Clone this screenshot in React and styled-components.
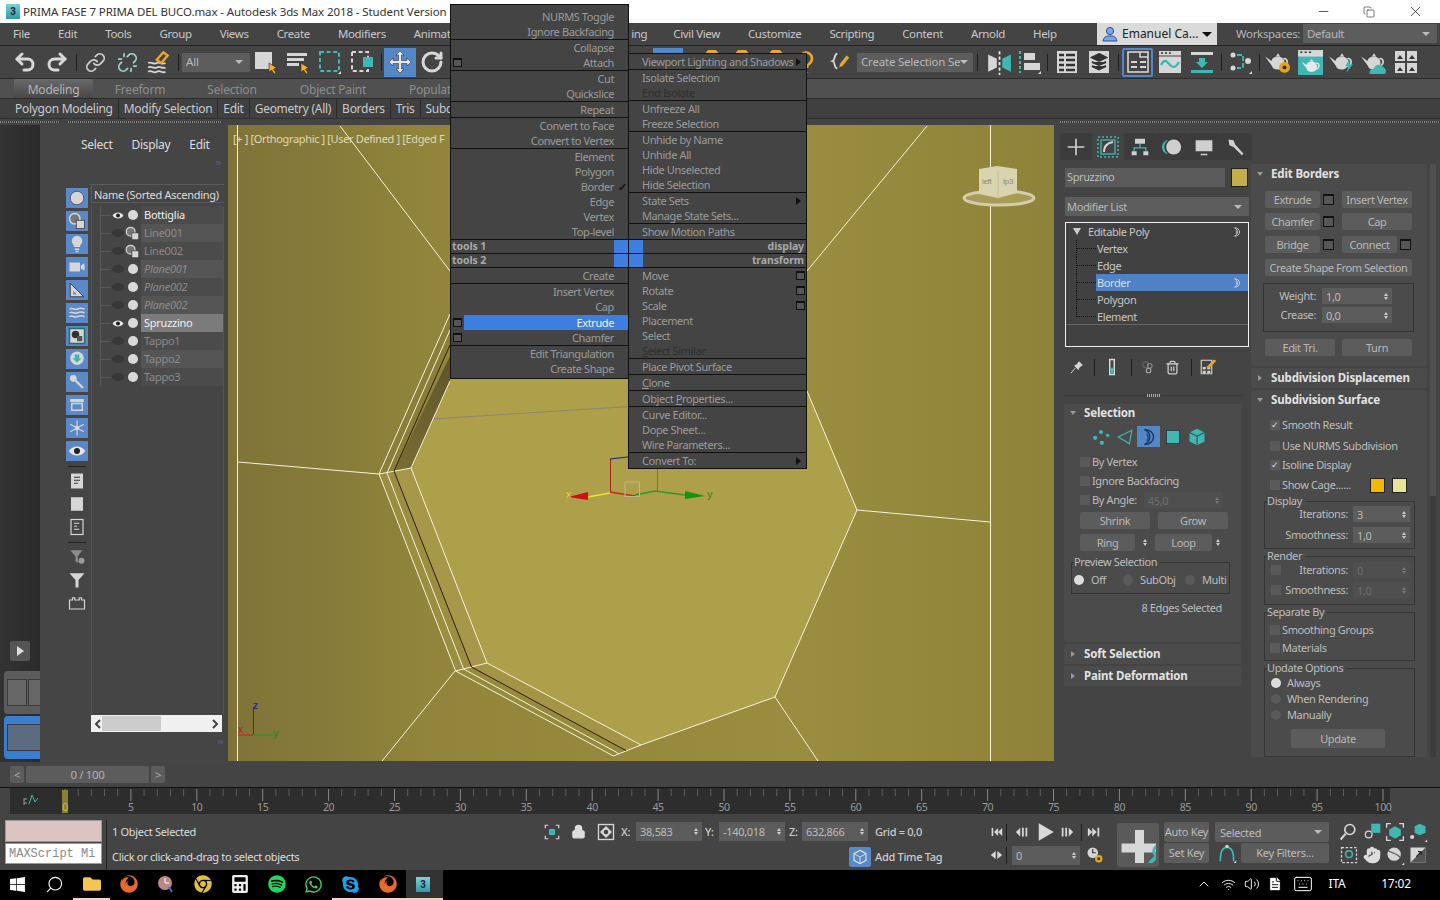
import React from "react";
import styled, { createGlobalStyle } from "styled-components";
import { Undo2, Redo2, Link, Unlink, RotateCw, Search, Trash2, Lock, Hand, ChevronUp, Wifi, Volume2, Keyboard, FileText, Minus, X as XIcon, Copy } from "lucide-react";
import { FaWindows, FaFirefox, FaChrome, FaSpotify, FaWhatsapp, FaSkype, FaFolder, FaCalculator } from "react-icons/fa";

const Global = createGlobalStyle`
  html, body { margin: 0; padding: 0; background: #444; }
  #root { width: 1440px; height: 900px; }
  * { box-sizing: border-box; }
`;
const TEAL = "#3fb8b4";
const LIGHT = "#d6d6d6";

const Frame = styled.div`
  position: relative; width: 1440px; height: 900px; overflow: hidden;
  display: flex; flex-direction: column; background: #444;
  font: 11.5px/1.2 "Noto Sans", "Open Sans", sans-serif; letter-spacing: -0.35px; color: #c4c4c4;
`;
/* title */
const TitleBar = styled.div`
  height: 23px; flex: none; background: #fff; color: #333; display: flex; align-items: center;
  font-size: 11.5px; padding-left: 6px; letter-spacing: -0.1px;
`;
const AppMark = styled.span`
  width: 14px; height: 15px; margin-right: 3px; background: linear-gradient(#7fd0d6, #2f9aa6); color: #123; font: bold 10px/15px "Liberation Sans", sans-serif; text-align: center; letter-spacing: 0;
`;
const WinButtons = styled.div`
  margin: 0 2px 0 auto; display: flex; align-items: center; color: #222;
`;
const WinBtn = styled.span`
  width: 46px; height: 23px; display: flex; align-items: center; justify-content: center;
`;
/* menu */
const MenuBar = styled.div`
  height: 23px; flex: none; display: flex; align-items: stretch; background: #444; border-bottom: 1px solid #222; padding-left: 13px; color: #c8c8c8;
`;
const MenuItem = styled.span`
  margin-right: ${p => p.$mr ?? 28}px; line-height: 21px; white-space: nowrap;
`;
const UserBox = styled.div`
  margin-left: auto; width: 120px; height: 22px; background: #dadada; color: #222; display: flex; align-items: center; padding-left: 5px; gap: 4px; font-size: 12px; letter-spacing: 0;
`;
const Caret = styled.span`
  width: 0; height: 0; border-left: ${p => p.$s || 4}px solid transparent; border-right: ${p => p.$s || 4}px solid transparent; border-top: ${p => p.$s || 4}px solid ${p => p.$c || "#bbb"}; flex: none;
`;
const WsLabel = styled.span`
  margin-left: 19px; width: 67px; line-height: 22px; color: #b5b5b5;
`;
const WsDrop = styled.div`
  width: 134px; height: 19px; margin: 1px 3px 0 0; background: #5d5d5d; display: flex; align-items: center; justify-content: space-between; padding: 0 7px 0 4px; color: #b8b8b8;
`;
/* toolbar */
const Toolbar = styled.div`
  height: 33px; flex: none; display: flex; align-items: center; background: #444; border-bottom: 1px solid #2c2c2c; padding-left: 9px;
`;
const Tool = styled.span`
  width: ${p => p.$w || 32}px; height: ${p => p.$h || 29}px; flex: none; display: flex; align-items: center; justify-content: center;
  ${p => p.$on && `background:#5487c8;`} ${p => p.$outline && `border:2px solid #5487c8; border-radius:2px;`}
`;
const TSep = styled.span`
  width: 1px; height: 17px; background: #1e1e1e; margin: 0 ${p => p.$m ?? 2.5}px; flex: none;
`;
const Gap = styled.span`
  width: ${p => p.$w}px; flex: none;
`;
const Drop = styled.div`
  width: ${p => p.$w}px; height: ${p => p.$h || 19}px; flex: none; background: ${p => p.$bg || "#5d5d5d"}; display: flex; align-items: center; justify-content: space-between; padding: 0 7px 0 4px; letter-spacing: -0.2px; color: #b9b9b9; white-space: nowrap; overflow: hidden; border-radius: 1px;
`;
/* ribbon */
const RibbonTabs = styled.div`
  height: 20px; flex: none; display: flex; align-items: stretch; padding-left: 14px; background: #505050; border-bottom: 1px solid #2c2c2c; color: #8d8d8d; font-size: 12px; letter-spacing: -0.2px;
`;
const RibbonTab = styled.span`
  width: ${p => p.$w}px; text-align: center; line-height: 21px;
  ${p => p.$on && `background: linear-gradient(#6a6a6a,#484848); color:#b5b5b5; border-radius:2px 2px 0 0;`}
`;
const RibbonPanels = styled.div`
  height: 20px; flex: none; display: flex; align-items: center; padding-left: 10px; background: #404040; border-bottom: 1px solid #303030; color: #c9c9c9; font-size: 12px; letter-spacing: -0.28px;
`;
const RibbonPanel = styled.span`
  padding: 0 5px; border-right: ${p => p.$nb ? 0 : "1px solid #2a2a2a"}; line-height: 19px; white-space: nowrap;
`;
const Grip = styled.div`
  height: 6px; flex: none; background: #444; display: flex; padding: 2px 0;
`;
const Dots = styled.span`
  height: 2px; width: ${p => p.$w}px; margin-left: ${p => p.$ml || 0}px; background: repeating-linear-gradient(90deg, #888 0 1px, #333 1px 2px);
`;
/* main */
const Main = styled.div`
  height: 637px; flex: none; display: flex;
`;
const SideDark = styled.div`
  width: 40px; flex: none; background: linear-gradient(90deg, #333, #2b2b2b); display: flex; flex-direction: column; align-items: flex-start; padding: 516px 0 0 4px; overflow: hidden;
`;
const SideBtn = styled.span`
  width: 20px; height: 20px; margin-left: 6px; background: #555; border-radius: 2px; display: flex; align-items: center; justify-content: center;
`;
const Layout = styled.span`
  width: 46px; height: 43px; flex: none; margin-top: ${p => p.$mt}px; display: flex; gap: 1px; padding: 8px 3px; border-radius: 4px;
  background: ${p => p.$on ? "#3a7ed0" : "#5c5c5c"};
`;
const Pane = styled.span`
  flex: ${p => p.$f || 1}; background: ${p => p.$on ? "#5b6c82" : "#676767"}; border: 1px solid #3a3a3a;
`;
const Explorer = styled.div`
  width: 188px; flex: none; background: #454545; display: flex; flex-direction: column; padding-top: 11px;
`;
const ExTabs = styled.div`
  display: flex; gap: 19px; padding-left: 41px; height: 18px; line-height: 18px; color: #ddd; font-size: 12px; letter-spacing: -0.3px;
`;
const More = styled.div`
  height: 16px; line-height: 16px; text-align: right; padding-right: 7px; color: #50557a; font-size: 10px; font-weight: bold;
`;
const ExBody = styled.div`
  flex: 1; display: flex; padding-left: 26px;
`;
const Strip = styled.div`
  width: 22px; flex: none; padding-top: 18px; display: flex; flex-direction: column; gap: 3px;
`;
const StripBtn = styled.span`
  width: 22px; height: 20px; flex: none; background: ${p => p.$plain ? "none" : "#5a88c8"}; display: flex; align-items: center; justify-content: center;
`;
const StripSep = styled.span`
  height: 1px; margin: 2px 2px 1px; background: #222; flex: none;
`;
const Tree = styled.div`
  width: 133px; margin: 14px 0 0 3px; display: flex; flex-direction: column;
`;
const TreeHead = styled.div`
  height: 19px; line-height: 19px; font-size: 11px; padding-left: 2px; color: #ddd; border: 1px solid #5a5a5a; border-right: 0; margin-bottom: 3px; white-space: nowrap; letter-spacing: -0.28px;
`;
const TreeBody = styled.div`
  flex: 1; border-left: 1px solid #555; border-right: 1px solid #555;
`;
const TreeRow = styled.div`
  height: 18px; display: flex; align-items: center;
`;
const Guide = styled.span`
  width: 12px; height: 18px; margin-left: 8px; flex: none; border-left: 1px solid #5a5a5a; position: relative;
  &::after { content: ""; position: absolute; left: 0; top: 9px; width: 10px; border-top: 1px solid #5a5a5a; }
`;
const Slot = styled.span`
  width: ${p => p.$w}px; height: 16px; flex: none; display: flex; align-items: center; justify-content: center;
`;
const Blob = styled.span`
  width: 12px; height: 8px; border-radius: 50%; background: #383838; flex: none;
`;
const Dot = styled.span`
  width: 10px; height: 10px; border-radius: 50%; background: #d9d9d9;
`;
const RowName = styled.span`
  flex: 1; height: 18px; line-height: 18px; padding-left: 3px; font-size: 11px; letter-spacing: -0.25px;
  background: ${p => p.$sel ? "#7b7b7b" : p.$alt ? "#555" : "#4b4b4b"};
  color: ${p => p.$on ? "#f0f0f0" : "#8c8c8c"}; font-style: ${p => p.$it ? "italic" : "normal"};
`;
const HScroll = styled.div`
  height: 17px; width: 131px; margin-top: 1px; background: #f0f0f0; display: flex; align-items: center; justify-content: space-between; padding: 0 3px; color: #444;
`;
const Thumb = styled.span`
  width: 59px; height: 15px; background: #ccc; margin-left: 1px; margin-right: auto;
`;
const MoreBottom = styled(More)`
  margin: 1px 0 15px -26px; padding-right: 1px; height: 14px;
`;
const Viewport = styled.div`
  width: 826px; height: 636px; flex: none; position: relative; overflow: hidden;
`;
const VLabel = styled.div`
  position: absolute; left: 5px; top: 7px; color: #dfd9b6; font-size: 11px; white-space: nowrap; letter-spacing: -0.35px;
`;
const VSvg = styled.svg`
  display: block;
`;
/* right panel */
const Right = styled.div`
  width: 386px; flex: none; background: #444; padding: 8px 0 0 6px; display: flex; flex-direction: column; color: #bdbdbd; font-size: 11px; letter-spacing: -0.38px;
`;
const CmdTabs = styled.div`
  height: 27px; display: flex;
`;
const CmdTab = styled.span`
  width: 32px; display: flex; align-items: center; justify-content: center; flex: none; background: ${p => p.$on ? "#444" : "#3c3c3c"}; border-radius: 3px 3px 0 0;
`;
const Cols = styled.div`
  flex: 1; display: flex;
`;
const ColA = styled.div`
  width: 191px; flex: none; padding: 8px 0 0 4px; background: #444;
`;
const ColB = styled.div`
  width: 176px; flex: none; padding-top: 4px;
`;
const Scroll = styled.div`
  width: 6px; margin: 4px 0 0 3px; height: 593px; background: #3c3c3c;
  &::before { content: ""; display: block; height: 332px; background: #4f4f4f; }
`;
const NameRow = styled.div`
  display: flex; margin-left: 1px; gap: 6px;
`;
const NameInput = styled.div`
  width: 160px; height: 19px; background: #5b5b5b; line-height: 18px; padding-left: 2px;
`;
const Swatch = styled.span`
  width: ${p => p.$w || 17}px; height: ${p => p.$h || 19}px; background: ${p => p.$c}; border: 1px solid #222; flex: none;
  ${p => p.$ml && `margin-left:${p.$ml}px;`}
`;
const ModDrop = styled(Drop)`
  margin: 10px 0 6px 1px; padding-left: 2px; letter-spacing: -0.35px;
`;
const Stack = styled.div`
  width: 184px; height: 125px; margin-left: 1px; border: 1px solid #f0f0f0; background: #414141; color: #c6c6c6;
`;
const StackList = styled.div`
  border-bottom: 1px solid #666; height: 102px;
`;
const StackRow = styled.div`
  height: 17px; display: flex; align-items: stretch; line-height: 17px;
`;
const Tri = styled.span`
  width: 0; height: 0; border-left: 4px solid transparent; border-right: 4px solid transparent; border-top: 7px solid #ccc; margin: 5px 6px 0 7px; flex: none;
`;
const Branch = styled.span`
  width: 20px; margin-left: 10px; flex: none; height: ${p => p.$last ? "9px" : "17px"}; border-left: 1px dotted #111; position: relative;
  &::after { content: ""; position: absolute; left: 0; top: 8px; width: 19px; border-top: 1px dotted #111; }
`;
const StackLabel = styled.span`
  flex: 1; padding-left: 1px; display: flex; justify-content: space-between; align-items: center; padding-right: 6px;
  ${p => p.$sel && `background:#4f81c7; color:#ddd;`}
`;
const StackTools = styled.div`
  height: 20px; margin: 10px 0 0 2px; display: flex; align-items: center;
`;
const Divider = styled.div`
  height: 1px; margin: 18px 8px 0 0; background: #3a3a3a; position: relative;
  &::after { content: ""; position: absolute; left: 83px; top: -1px; width: 14px; height: 3px; background: repeating-linear-gradient(90deg, #aaa 0 1px, #444 1px 2px); }
`;
const Rollout = styled.section`
  width: ${p => p.$w || 177}px; ${p => p.$h && `height:${p.$h}px;`} margin-top: ${p => p.$mt || 0}px; background: #4b4b4b; border-radius: 2px; overflow: hidden;
`;
const RollHead = styled.header`
  height: ${p => p.$h || 17}px; display: flex; align-items: center; font-weight: 700; color: #e2e2e2; font-size: 11.5px; letter-spacing: -0.15px; white-space: nowrap; padding-right: 6px;
`;
const Arrow = styled.span`
  flex: none; margin: 0 8px 0 6px; width: 6px; height: 6px; display: flex; align-items: center; justify-content: center;
  &::before { content: ""; ${p => p.$open ? "border-left:3px solid transparent;border-right:3px solid transparent;border-top:4px solid #999;" : "border-top:3px solid transparent;border-bottom:3px solid transparent;border-left:4px solid #999;"} }
`;
const Handle = styled.span`
  margin-left: auto; width: 6px; height: 6px; flex: none; background: radial-gradient(circle, #888 35%, transparent 40%) 0 0/2px 2px;
`;
const RowY = styled.div`
  display: flex; align-items: center; height: ${p => p.$h || 18}px; margin-top: ${p => p.$mt || 0}px; padding-left: ${p => p.$pl || 0}px;
`;
const CheckBox = styled.span`
  width: 10px; height: 10px; flex: none; background: #5a5a5a; margin-right: ${p => p.$mr ?? 2}px; color: #ddd; font-size: 9px; line-height: 10px; text-align: center; letter-spacing: 0;
`;
const Btn = styled.span`
  width: ${p => p.$w}px; height: ${p => p.$h || 17}px; flex: none; background: #5c5c5c; border-radius: 2px; text-align: center; line-height: ${p => (p.$h || 17)}px; color: #b8b8b8; margin-left: ${p => p.$ml || 0}px; white-space: nowrap;
`;
const OptBox = styled.span`
  width: ${p => p.$s || 9}px; height: ${p => p.$s || 9}px; margin: 0 ${p => p.$mr ?? 2}px 0 ${p => p.$ml ?? 2}px; flex: none; border: 1px solid #111; border-top-width: 2px; background: #565656;
`;
const Spin = styled.span`
  width: ${p => p.$w}px; height: ${p => p.$h || 16}px; flex: none; background: ${p => p.$off ? "#4f4f4f" : "#5c5c5c"}; color: ${p => p.$off ? "#6e6e6e" : "#bbb"}; display: flex; align-items: center; justify-content: space-between; padding: 0 4px; line-height: 1; margin-left: ${p => p.$ml || 0}px;
`;
const SpinArrows = styled.span`
  display: flex; flex-direction: column; gap: 1px; flex: none; margin-left: ${p => p.$ml || 0}px;
  &::before, &::after { content: ""; border-left: 2.5px solid transparent; border-right: 2.5px solid transparent; }
  &::before { border-bottom: 3px solid ${p => p.$c || "#ccc"}; }
  &::after { border-top: 3px solid ${p => p.$c || "#ccc"}; }
`;
const Box = styled.div`
  width: 151px; height: 49px; margin: 7px 0 0 12px; border: 1px solid #333; padding-top: 4px;
`;
const Field = styled.fieldset`
  width: ${p => p.$w}px; margin: ${p => p.$mt || 0}px 0 0 ${p => p.$ml || 0}px; padding: 0 0 ${p => p.$pb || 0}px; border: 1px solid #353535; min-width: 0;
`;
const Legend = styled.legend`
  padding: 0 3px 0 0; margin-left: 2px; height: 14px; line-height: 14px; color: #bdbdbd;
`;
const Radio = styled.span`
  width: 10px; height: 10px; border-radius: 50%; flex: none; background: ${p => p.$on ? "#ddd" : "#5a5a5a"}; margin-left: ${p => p.$ml || 0}px;
`;
const RLabel = styled.span`
  margin-left: ${p => p.$ml || 0}px; white-space: nowrap; ${p => p.$w && `width:${p.$w}px; flex:none;`}
`;
const RightLabel = styled.span`
  width: ${p => p.$w}px; text-align: right; flex: none; white-space: nowrap;
`;
const StatusNote = styled.div`
  margin: 7px 19px 0 0; height: 14px; line-height: 14px; text-align: right;
`;
/* timeline */
const SliderRow = styled.div`
  height: 25px; flex: none; display: flex; align-items: flex-start; padding: 4px 0 0 10px; background: #444; gap: 2px;
`;
const SliderBtn = styled.span`
  width: ${p => p.$w}px; height: 17px; background: #5c5c5c; border-radius: 2px; text-align: center; line-height: 17px; color: #b0b0b0;
`;
const TrackRow = styled.div`
  height: 28px; flex: none; border-top: 1px solid #111; display: flex; background: #444; padding-left: 10px;
`;
const Track = styled.div`
  width: 1380px; height: 26px; background: #2d2d2d;
`;
const TrackSvg = styled.svg`
  display: block; overflow: visible;
`;
const Status = styled.div`
  height: 55px; flex: none; display: flex; background: #444; padding-top: 5px;
`;
const Mini = styled.div`
  width: 97px; margin-left: 5px; flex: none; height: 44px; display: flex; flex-direction: column; gap: 1px;
`;
const MiniPink = styled.div`
  height: 22px; background: #dcc4c4; border: 1px solid #9a9a9a;
`;
const MiniWhite = styled.div`
  height: 21px; background: #fff; color: #8a8a8a; font: 12px/20px "Liberation Mono", monospace; letter-spacing: 0; padding-left: 3px; overflow: hidden; white-space: nowrap; border: 1px solid #9a9a9a;
`;
const StSep = styled.span`
  width: 1px; height: 50px; margin: 0 5px 0 4px; background: #222; flex: none;
`;
const Info = styled.div`
  width: 426px; flex: none; display: flex; flex-direction: column; padding-top: 5px; color: #ddd; font-size: 11px;
`;
const InfoLine = styled.div`
  height: 14px; line-height: 14px; margin-bottom: ${p => p.$mb || 0}px; white-space: nowrap; letter-spacing: -0.3px;
`;
const Coords = styled.div`
  width: 452px; flex: none; display: flex; flex-direction: column; padding-top: 2px; font-size: 11px; letter-spacing: -0.3px;
`;
const CoordRow = styled.div`
  height: 19px; display: flex; align-items: center; margin-top: ${p => p.$mt || 0}px; padding-left: ${p => p.$pl || 0}px;
`;
const CLabel = styled.span`
  width: ${p => p.$w}px; flex: none; color: #ccc; font-weight: 500; white-space: nowrap; padding-left: ${p => p.$pl || 0}px;
`;
const CIcon = styled.span`
  width: 27px; flex: none; display: flex; justify-content: center;
`;
const TagBtn = styled.span`
  width: 22px; height: 20px; background: #5a88c8; border-radius: 2px; display: flex; align-items: center; justify-content: center; margin-right: 4px;
`;
const Play = styled.div`
  width: 127px; flex: none; display: flex; flex-direction: column; padding-top: 2px; font-size: 11px;
`;
const PlayRow = styled.div`
  height: 20px; display: flex; align-items: center; margin-top: ${p => p.$mt || 0}px;
`;
const PSlot = styled.span`
  width: ${p => p.$w}px; flex: none; display: flex; align-items: center; justify-content: center; color: #ddd;
`;
const BigKey = styled.div`
  width: 42px; height: 44px; margin-top: 3px; flex: none; background: #5a5a5a; border-radius: 3px; display: flex; align-items: center; justify-content: center;
`;
const Keys = styled.div`
  width: 165px; margin-left: 5px; flex: none; display: grid; grid-template-columns: 51px 26px 88px; grid-template-rows: 20px 20px; row-gap: 1px; padding-top: 2px; font-size: 11px; letter-spacing: -0.3px;
`;
const KeyBtn = styled.span`
  background: #5c5c5c; text-align: center; line-height: 19px; color: #bbb; border-radius: 2px; white-space: nowrap; ${p => p.$narrow && "margin-right:6px;"}
`;
const KeyDrop = styled(KeyBtn)`
  grid-column: span 2; text-align: left; padding: 0 7px 0 5px; display: flex; align-items: center; justify-content: space-between;
`;
const KeyIco = styled.span`
  display: flex; align-items: center; justify-content: center; margin-right: 3px;
`;
const Nav = styled.div`
  width: 92px; margin-left: 8px; flex: none; display: grid; grid-template-columns: repeat(4, 23px); grid-template-rows: 20px 20px; row-gap: 3px; padding-top: 2px;
`;
const NavI = styled.span`
  display: flex; align-items: center; justify-content: center;
`;
/* taskbar */
const Taskbar = styled.div`
  height: 30px; flex: none; background: #000; display: flex; align-items: stretch; color: #fff;
`;
const TSlot = styled.span`
  width: ${p => p.$w || 37}px; flex: none; display: flex; align-items: center; justify-content: center; ${p => p.$active && "background:#333;"} border-bottom: 2px solid ${p => p.$run ? "#f3d3b8" : "transparent"}; ${p => p.$first && "margin-left:-1px;"} ${p => p.$text && "font-size:12px; letter-spacing:-0.2px;"}
`;
const TraySpacer = styled.span`
  flex: 1;
`;
const Flip = styled.span`
  display: flex; transform: scaleX(-1);
`;
/* context menus */
const Ctx = styled.div`
  position: absolute; left: ${p => p.$x}px; top: ${p => p.$y}px; width: 179px; background: #444; border: 1px solid #111; padding-top: ${p => p.$pt || 0}px; padding-bottom: ${p => p.$pb || 0}px; font-size: 11px; color: #9b9b9b; letter-spacing: -0.4px;
`;
const CtxGroup = styled.div`
  border-bottom: ${p => p.$nb ? 0 : "1px solid #111"};
`;
const CtxRow = styled.div`
  height: 15px; line-height: 15px; display: flex; align-items: center; position: relative; margin-top: ${p => p.$mt || 0}px;
`;
const CtxLabelR = styled.span`
  flex: 1; text-align: right; padding-right: 14px; height: 15px; white-space: nowrap;
  ${p => p.$hi && "background:#3d7ede; color:#f2f2f2;"}
`;
const CtxLabelL = styled.span`
  flex: 1; padding-left: 13px; white-space: nowrap; color: ${p => p.$off ? "#2f2f2f" : "#9b9b9b"};
`;
const CtxBoxSlot = styled.span`
  width: 13px; flex: none; display: flex; justify-content: center;
`;
const CtxCheck = styled.span`
  position: absolute; right: 1px; top: 0; color: #111; font-size: 11px; line-height: 15px; font-weight: bold;
`;
const CtxTri = styled.span`
  margin-right: 5px; width: 0; height: 0; border-top: 4px solid transparent; border-bottom: 4px solid transparent; border-left: 5px solid #111; flex: none;
`;
const CtxBar = styled.div`
  height: 13px; display: flex; align-items: stretch; justify-content: space-between; font-weight: 700; font-size: 10.5px; line-height: 13px; color: #a8a8a8; letter-spacing: -0.1px;
`;
const CtxBarText = styled.span`
  padding: 0 2px 0 1px;
`;
const Blue = styled.span`
  width: 14px; background: #3d7ede; flex: none;
`;

/* ------- icons ------- */
const I = ({ s = 20, w, h, vb = "0 0 24 24", children }) => (
  <svg width={w || s} height={h || s} viewBox={vb} fill="none">{children}</svg>
);
const Cursor = () => <path d="M15 13l8 5-3.4 1 2.4 4-2 1-2.4-4-2.6 2.6z" fill="#f4b223" stroke="#222" strokeWidth=".6" />;
const Snap = () => <I s={24}><path d="M5 6a7 7 0 0114 0v10h-4V6a3 3 0 00-6 0v10H5z" fill="#e8a92a" /></I>;
const Question = () => <I s={24}><path d="M6 8a6 6 0 1110 5c-2 2-3 2-3 5M13 22v.5" stroke="#e8a92a" strokeWidth="2.6" /></I>;
const BindIc = () => <I s={26}><path d="M2 13c3-2 5 2 8 0s5 2 8 0M2 17c3-2 5 2 8 0s5 2 8 0M2 21c3-2 5 2 8 0s5 2 8 0" stroke={LIGHT} strokeWidth="1.6" /><path d="M10 10l6-7 4 3-6 7z" stroke="#e8a92a" strokeWidth="2.2" /></I>;
const SelObj = () => <I s={24}><rect x="1" y="2" width="17" height="17" fill={LIGHT} /><Cursor /></I>;
const SelName = () => <I s={24}><path d="M1 3h20v3H1zM1 8h17v3H1zM1 13h12v3H1z" fill={LIGHT} /><Cursor /></I>;
const RectR = () => <I s={24}><rect x="2" y="2" width="19" height="19" stroke={TEAL} strokeWidth="2" strokeDasharray="4 2.6" /><path d="M20 24l3-3v3z" fill="#ddd" /></I>;
const Cross = () => <I s={24}><rect x="2" y="2" width="16" height="19" stroke={LIGHT} strokeWidth="2" strokeDasharray="4 2.6" /><rect x="13" y="7" width="10" height="10" fill={TEAL} /></I>;
const MoveIc = () => <I s={24}><path d="M12 1l4 4h-2.5v5.5H19V8l4 4-4 4v-2.5h-5.5V19H16l-4 4-4-4h2.5v-5.5H5V16l-4-4 4-4v2.5h5.5V5H8z" fill="#e8e8e8" stroke="#333" strokeWidth=".6" /></I>;
const Braces = () => <I s={22}><path d="M8 3c-4 0-2 7-5 8 3 1 1 8 5 8" stroke={LIGHT} strokeWidth="2" /><path d="M11 14l7-9 3 2-7 9-4 2z" fill="#e8a92a" /></I>;
const Mirror = () => <I s={26}><path d="M2 5l8 4v8l-8 4z" fill={LIGHT} /><path d="M23 5l-8 4v8l8 4z" fill={TEAL} /><path d="M12.5 2v22" stroke="#e8e8e8" strokeWidth="1.6" strokeDasharray="3 2" /></I>;
const Align = () => <I s={24}><path d="M2 1v22" stroke={TEAL} strokeWidth="2" strokeDasharray="3 2" /><path d="M6 3h11v7H6zM6 13h16v7H6z" fill={LIGHT} /><path d="M20 24l3-3v3z" fill="#ddd" /></I>;
const ListIc = () => <I s={24}><rect x="2" y="1" width="20" height="22" fill={LIGHT} /><path d="M4 5h5M11 5h9M4 10h5M11 10h9M4 15h5M11 15h9M4 20h5M11 20h9" stroke="#333" strokeWidth="2.4" /></I>;
const Layers = () => <I s={24}><rect x="2" y="1" width="20" height="22" fill={LIGHT} /><path d="M12 4l7 3.5-7 3.5-7-3.5zM5 12l7 3 7-3M5 16l7 3.5 7-3.5" stroke="#333" strokeWidth="2" fill="#333" /></I>;
const RibbonIc = () => <I s={24}><rect x="2" y="2" width="20" height="20" stroke={LIGHT} strokeWidth="1.6" /><path d="M14 2v5h8" stroke={LIGHT} strokeWidth="1.5" /><path d="M5 12h6M14 12h6M5 17h6M14 17h6" stroke={LIGHT} strokeWidth="2.2" /></I>;
const Curve = () => <I s={24}><rect x="1" y="1" width="22" height="22" fill={LIGHT} /><path d="M1 6h22" stroke="#444" strokeWidth="1" /><path d="M3 3h2M7 3h2M11 3h2" stroke="#333" strokeWidth="1.5" /><path d="M3 15c4-8 7-2 9 0s5 4 9-3" stroke={TEAL} strokeWidth="2.4" /></I>;
const Dope = () => <I s={24}><path d="M1 2h22v3H1z" fill={LIGHT} /><path d="M1 20h22v3H1z" fill={TEAL} /><path d="M9 8h6v4h3l-6 6-6-6h3z" fill={TEAL} /></I>;
const Schem = () => <I s={24}><circle cx="4" cy="5" r="2.5" fill={LIGHT} /><circle cx="4" cy="18" r="2.5" fill={LIGHT} /><path d="M8 5h6v13H8" stroke={TEAL} strokeWidth="1.8" fill="none" strokeDasharray="5 2" /><circle cx="19" cy="11" r="3" fill={LIGHT} /><path d="M20 24l3-3v3z" fill="#ddd" /></I>;
const Pot = ({ c = LIGHT }) => <g><path d="M0 7l6 4c1-3 3-4 6-4s6 2 6 6c0 4-3 6-6 6s-5-1-6-4z" fill={c} /><path d="M10 7l2-3 2 3z" fill={c} /><path d="M17 9c4-1 5 5 0 7" stroke={c} strokeWidth="1.6" /></g>;
const Teapot1 = () => <I s={26}><Pot /><circle cx="18" cy="17" r="5" fill="#e3a71f" /><circle cx="18" cy="17" r="1.8" fill="#333" /></I>;
const Teapot2 = () => <I s={26}><rect x="1" y="1" width="23" height="23" fill={TEAL} /><path d="M1 1h23v6H1z" fill="#d8d8d8" /><path d="M3 3h2M7 3h2M11 3h2" stroke="#333" strokeWidth="1.5" /><g transform="translate(4 6) scale(.8)"><Pot c="#e8e8e8" /></g></I>;
const Teapot3 = () => <I s={26}><Pot /><path d="M19 9l-4 7h3l-2 6 6-8h-3z" fill={TEAL} /><path d="M22 26l3-3v3z" fill="#ddd" /></I>;
const Teapot4 = () => <I s={26}><Pot /><path d="M8 23a4 4 0 014-5 5 5 0 019-1 4 4 0 011 6z" fill={TEAL} /></I>;
const Views = () => <I s={24}><path d="M1 1h10v10H1zM13 1h10v10H13zM1 13h10v10H1zM13 13h10v10H13z" fill={LIGHT} /><path d="M3 9l3-4 3 4zM15 9l3-4 3 4zM3 21l3-4 3 4zM15 21l3-4 3 4z" fill="#333" /></I>;
const Sphere = () => <I s={18}><circle cx="12" cy="12" r="9" fill={LIGHT} stroke="#444" /></I>;
const ShapeIc = ({ s = 18 }) => <I s={s}><circle cx="9" cy="9" r="7" stroke={LIGHT} strokeWidth="2" fill="#777" /><rect x="11" y="11" width="11" height="11" fill={LIGHT} stroke="#333" /></I>;
const Bulb = () => <I s={18}><path d="M7 13a7 7 0 1110 0c-1 1-1 2-1 3H8c0-1 0-2-1-3z" fill={LIGHT} /><path d="M9 19h6M10 22h4" stroke={LIGHT} strokeWidth="2" /></I>;
const Cam = () => <I s={18}><path d="M2 6h14v12H2zM17 10l5-3v10l-5-3z" fill={LIGHT} /></I>;
const Ruler = () => <I s={18}><path d="M3 3l18 18H3z" fill={LIGHT} stroke="#222" /><path d="M7 13l5 5H7z" fill="#5a88c8" /></I>;
const Waves = () => <I s={18}><path d="M2 7c4-3 6 2 10 0s6-2 10 0M2 12c4-3 6 2 10 0s6-2 10 0M2 17c4-3 6 2 10 0s6-2 10 0" stroke={LIGHT} strokeWidth="2" /></I>;
const Frame3 = () => <I s={18}><rect x="2" y="2" width="20" height="20" stroke="#1f6f6f" strokeWidth="2" fill={LIGHT} /><circle cx="10" cy="10" r="5" fill="#333" /><rect x="12" y="12" width="7" height="7" fill="#555" /></I>;
const Imp = () => <I s={18}><circle cx="12" cy="11" r="9" fill={LIGHT} /><path d="M9 6h6v5h3l-6 6-6-6h3z" fill={TEAL} /></I>;
const Mic = () => <I s={18}><circle cx="7" cy="7" r="4.5" fill={LIGHT} /><path d="M10 10l10 10" stroke={LIGHT} strokeWidth="3" /></I>;
const Drawer = () => <I s={18}><path d="M3 4h18v4H3z" fill={LIGHT} /><path d="M5 10h14v9H5z" stroke={LIGHT} strokeWidth="2" /></I>;
const Flake = () => <I s={18}><circle cx="12" cy="12" r="3" fill={LIGHT} /><path d="M12 2v20M3 7l18 10M3 17l18-10" stroke={LIGHT} strokeWidth="1.6" /></I>;
const EyeIc = ({ s = 18 }) => <I s={s} vb="0 0 24 16"><path d="M1 8c5-8 17-8 22 0-5 8-17 8-22 0z" fill="#e6e6e6" /><circle cx="12" cy="8" r="4" fill="#222" /></I>;
const Doc1 = () => <I s={18}><rect x="4" y="2" width="16" height="20" fill={LIGHT} /><path d="M8 7h8M8 11h8M8 15h5" stroke="#333" strokeWidth="1.6" /></I>;
const Doc2 = () => <I s={18}><rect x="4" y="3" width="16" height="18" fill={LIGHT} /></I>;
const Doc3 = () => <I s={18}><rect x="4" y="2" width="16" height="20" stroke={LIGHT} strokeWidth="1.6" /><path d="M8 7h7M8 11h4M8 15h7" stroke={LIGHT} strokeWidth="1.6" /></I>;
const Fun1 = () => <I s={18}><path d="M3 3h16l-6 8v9l-3-2v-7z" fill="#8d8d8d" /><circle cx="18" cy="17" r="4" fill="#9a9a9a" /></I>;
const Fun2 = () => <I s={18}><path d="M2 3h20l-8 9v10h-4V12z" fill={LIGHT} /></I>;
const Brick = () => <I s={18}><path d="M2 8h4V5h3v3h6V5h3v3h4v12H2z" stroke={LIGHT} strokeWidth="1.6" /></I>;
const Ear = ({ s = 10, c = "#ddd" }) => <I s={s}><path d="M6 2c8 0 12 5 12 10s-4 10-12 10c4-2 7-6 7-10S10 4 6 2z" stroke={c} strokeWidth="2" fill="none" /><path d="M9 8c2 2 3 6 0 9" stroke={c} strokeWidth="1.5" /></I>;
const PlusIc = () => <I s={20}><path d="M12 2v20M2 12h20" stroke="#cfcfcf" strokeWidth="2" /></I>;
const ModIc = () => <I s={24}><rect x="2" y="2" width="20" height="20" stroke={TEAL} strokeWidth="1.5" strokeDasharray="2 2" /><rect x="5" y="5" width="14" height="14" stroke={TEAL} strokeWidth="1.3" /><path d="M8 17c0-6 3-9 9-10" stroke={LIGHT} strokeWidth="2" /></I>;
const Hier = () => <I s={20}><path d="M6 2h12v6H6zM2 17h6v5H2zM16 17h6v5h-6z" fill="#cfcfcf" /><path d="M12 8v5M5 17v-4h14v4" stroke={TEAL} strokeWidth="1.5" /></I>;
const Motion = () => <I s={20}><circle cx="14" cy="12" r="9" fill="#cfcfcf" /><path d="M3 6a10 10 0 000 12M6 4a10 10 0 000 16" stroke={TEAL} strokeWidth="1.5" /></I>;
const Mon = () => <I s={20}><path d="M2 4h20v13H2zM8 20h8v2H8z" fill="#cfcfcf" /></I>;
const Wrench = () => <I s={20}><path d="M3 3l6 1 2 5 10 11-2 2L9 12 4 10z" fill="#cfcfcf" /></I>;
const Pin = () => <I s={15}><path d="M3 21l7-8" stroke="#d6d6d6" strokeWidth="1.6" /><path d="M8 9l7 7 2-4 5-4-6-6-4 5z" fill="#d6d6d6" /></I>;
const Tube = () => <I s={18}><path d="M8 2h8M9 2v20h6V2" stroke={LIGHT} strokeWidth="2" /><path d="M10 13h4v8h-4z" fill={TEAL} /></I>;
const Rings = () => <I s={18}><circle cx="8" cy="8" r="5" stroke="#666" strokeWidth="1.8" /><circle cx="15" cy="10" r="4" stroke="#888" strokeWidth="1.8" /><circle cx="13" cy="18" r="4" stroke="#aaa" strokeWidth="1.8" /></I>;
const Config = () => <I s={18}><path d="M3 3h14v18H3z" stroke={LIGHT} strokeWidth="1.5" /><path d="M5 12h4v3H5zM11 12h4v3h-4zM5 17h4v3H5zM11 17h4v3h-4z" fill={LIGHT} /><path d="M10 12l10-10 3 2-10 10z" fill="#e8a92a" /></I>;
const VDots = () => <I s={20}><circle cx="12" cy="6" r="2.5" fill={TEAL} /><circle cx="5" cy="13" r="2.5" fill={TEAL} /><circle cx="13" cy="19" r="2.5" fill={TEAL} /><circle cx="20" cy="10" r="2" fill={TEAL} /></I>;
const VEdge = () => <I s={18}><path d="M3 12L21 3l-3 18z" stroke={TEAL} strokeWidth="1.6" /></I>;
const VPoly = () => <I s={16}><rect x="2" y="2" width="20" height="20" fill={TEAL} stroke="#222" /></I>;
const VCube = () => <I s={18}><path d="M12 1l10 5v12l-10 5-10-5V6z" fill={TEAL} /><path d="M2 6l10 5 10-5M12 11v12" stroke="#444" strokeWidth="1.4" /></I>;
const Isolate = () => <I s={18}><path d="M3 7V3h4M17 3h4v4M21 17v4h-4M7 21H3v-4" stroke={LIGHT} strokeWidth="1.6" /><rect x="8" y="8" width="8" height="8" fill={TEAL} /></I>;
const Absolute = () => <I s={18}><rect x="2" y="2" width="20" height="20" stroke={LIGHT} strokeWidth="1.8" /><path d="M12 4l8 8-8 8-8-8z" fill={LIGHT} /><circle cx="12" cy="12" r="3" fill="#444" /></I>;
const TagCube = () => <I s={16}><path d="M12 2l9 5v10l-9 5-9-5V7z" stroke="#e8e8e8" strokeWidth="1.6" /><path d="M3 7l9 5 9-5M12 12v10" stroke="#e8e8e8" strokeWidth="1.3" /></I>;
const Clock = () => <I s={18}><circle cx="9" cy="9" r="7" fill={LIGHT} /><path d="M9 4v5h4" stroke="#333" strokeWidth="1.5" /><circle cx="17" cy="17" r="5" fill="#e3a71f" /><circle cx="17" cy="17" r="2" fill="#333" /></I>;
const Tang = () => <I s={20}><path d="M4 22C4 10 6 6 12 5c6 1 8 5 8 17" stroke={TEAL} strokeWidth="2" /><circle cx="12" cy="4" r="2" fill={LIGHT} /><path d="M20 24l3-3v3z" fill="#ddd" /></I>;
const BigPlus = () => <I s={36}><path d="M10 2h6v9h9v6h-9v9h-6v-9H1v-6h9z" fill="#d8d8d8" /><path d="M15 31l6-8 5-5" stroke={TEAL} strokeWidth="2.5" /><circle cx="26" cy="16" r="3.5" stroke={TEAL} strokeWidth="2" /></I>;
const PlayGlyph = ({ d, s = 14, c = "#d8d8d8" }) => <I s={s} vb="0 0 16 16"><path d={d} fill={c} /></I>;
const Nav1 = () => <I s={20}><circle cx="13" cy="9" r="6" stroke={LIGHT} strokeWidth="2" /><path d="M8 14l-6 7" stroke={LIGHT} strokeWidth="2.5" /></I>;
const Nav2 = () => <I s={20}><circle cx="8" cy="15" r="4" stroke={LIGHT} strokeWidth="1.6" /><rect x="11" y="2" width="11" height="11" fill={TEAL} /></I>;
const Nav3 = () => <I s={20}><path d="M2 7V2h5M17 2h5v5M22 17v5h-5M7 22H2v-5" stroke={LIGHT} strokeWidth="1.6" /><path d="M12 5l7 4v7l-7 4-7-4V9z" fill={TEAL} /></I>;
const Nav4 = () => <I s={20}><path d="M14 2l7 3v8l-7 3-6-3V5z" fill={TEAL} /><circle cx="5" cy="18" r="2.5" fill={LIGHT} /><path d="M20 24l3-3v3z" fill="#ddd" /></I>;
const Nav5 = () => <I s={20}><rect x="3" y="3" width="18" height="18" stroke={LIGHT} strokeWidth="1.5" strokeDasharray="3 2" /><circle cx="12" cy="11" r="4" stroke={TEAL} strokeWidth="1.8" /></I>;
const Nav7 = () => <I s={20}><circle cx="11" cy="11" r="8" fill={LIGHT} /><path d="M4 7c5 3 12 4 14 8" stroke="#555" strokeWidth="1.4" /><path d="M20 24l3-3v3z" fill="#ddd" /></I>;
const Nav8 = () => <I s={20}><rect x="3" y="3" width="18" height="18" fill={LIGHT} /><path d="M3 21L21 3v18z" fill="#555" /><path d="M10 14l6-6M16 8h-4M16 8v4" stroke="#222" strokeWidth="1.4" /></I>;

const Scene = () => {
  const W = "#f6f2dc";
  const lines = [
    "340,126 450,271", "927,126 807,271", "857,510 990,522", "775,697 818,761", "238,462 379,474", "455,671 382,761",
    "379,474 450,314", "387,473 450,330", "411,468 450,381",
    "379,474 455.6,671 613.4,756", "387,473 463.6,669 618.7,753.5", "411,468 487,663 641,745",
    "379,474 411,468", "455.6,671 487,663", "613.4,756 641,745", "641,745 775,697 857,510 807,391",
  ];
  return (
    <VSvg width="826" height="636" viewBox="228 125 826 636">
      <defs>
        <linearGradient id="bg" gradientUnits="userSpaceOnUse" x1="228" x2="1054" y1="0" y2="0">
          <stop offset="0" stopColor="#7f7338" /><stop offset="0.1" stopColor="#85793a" /><stop offset="0.25" stopColor="#92853b" />
          <stop offset="0.7" stopColor="#9a8d3f" /><stop offset="0.85" stopColor="#93873c" /><stop offset="1" stopColor="#8f8339" />
        </linearGradient>
        <linearGradient id="dk" gradientUnits="userSpaceOnUse" x1="394" x2="450" y1="470" y2="360">
          <stop offset="0" stopColor="#7a6e34" /><stop offset="1" stopColor="#5f552a" />
        </linearGradient>
      </defs>
      <rect x="228" y="125" width="826" height="636" fill="url(#bg)" />
      <polygon points="411,468 450,381 450,300 807,300 807,391 857,510 775,697 641,745 487,663" fill="#ae9f4b" />
      <polygon points="411,468 394,471 471.5,667 487,663" fill="#a69848" />
      <polygon points="487,663 471.5,667 626,750.6 641,745" fill="#a39546" />
      <polygon points="379,474 394,471 471.5,667 455.6,671" fill="#9b8e41" />
      <polygon points="455.6,671 471.5,667 626,750.6 613.4,756" fill="#968a3d" />
      <polygon points="379,474 394,471 450,345 450,314" fill="#8a7e38" />
      <polygon points="394,471 411,468 450,381 450,356" fill="url(#dk)" />
      <polyline points="432,419 629,406.5" stroke="#8f8570" fill="none" />
      {lines.map(p => <polyline key={p} points={p} stroke={W} strokeWidth="1" fill="none" />)}
      <polyline points="394,471 450,345" stroke="#3a1c10" fill="none" />
      <polyline points="394,471 471.5,667 626,750.6" stroke="#3a1a10" strokeWidth="1" fill="none" />
      <path d="M237.5 125v636M990.5 125v636" stroke={W} />
      <path d="M610.5 492v-33" stroke="#a5241a" fill="none" /><path d="M610 459l18-2" stroke="#1c1c80" />
      <path d="M657.5 492v-26" stroke="#2aa02a" />
      <path d="M588 497l22-4" stroke="#f2e22a" strokeWidth="1.5" /><path d="M610 492l25 4" stroke="#c62a1a" strokeWidth="1.5" />
      <path d="M635 495l20-4 30 4" stroke="#2a9a2a" strokeWidth="1.5" fill="none" />
      <path d="M568 497l20-5v8z" fill="#cf1010" /><path d="M685 491l20 5-20 3z" fill="#149414" />
      <rect x="625" y="482" width="14.5" height="14.5" stroke="#bfb58b" fill="none" />
      <text x="566" y="498" fill="#e8d62a" fontSize="10" fontFamily="Liberation Sans">x</text>
      <text x="707" y="498" fill="#1e8a1e" fontSize="11" fontFamily="Liberation Sans">y</text>
      <path d="M253.5 735v-28" stroke="#2a2a9a" /><path d="M253 735h-15" stroke="#c21f1f" /><path d="M253 735h20" stroke="#1f9a1f" />
      <text x="253" y="709" fill="#2a2a9a" fontSize="10" fontWeight="bold" fontFamily="Liberation Sans">z</text>
      <text x="238" y="733" fill="#b42020" fontSize="10" fontFamily="Liberation Sans">x</text>
      <text x="273" y="737" fill="#1f8a1f" fontSize="11" fontFamily="Liberation Sans">y</text>
      <ellipse cx="999" cy="198" rx="35" ry="7" stroke="#d3cdab" strokeWidth="3" fill="#a89b55" />
      <path d="M979 169l18-3 20 3v24l-19 5-19-4z" fill="#d9d4b0" />
      <path d="M998 171v26" stroke="#c4be98" />
      <text x="982" y="184" fill="#8e8a70" fontSize="8" fontFamily="Liberation Sans">left</text>
      <text x="1003" y="184" fill="#8e8a70" fontSize="8" fontFamily="Liberation Sans">tp3</text>
    </VSvg>
  );
};

const leftMenu = [
  ["NURMS Toggle", "Ignore Backfacing"], ["Collapse", "@Attach"], ["Cut", "Quickslice"], ["Repeat"], ["Convert to Face", "Convert to Vertex"],
  ["Element", "Polygon", "#Border", "Edge", "Vertex", "Top-level"],
];
const leftMenu2 = [["Create"], ["Insert Vertex", "Cap", "!Extrude", "@Chamfer"], ["Edit Triangulation", "Create Shape"]];
const LeftRow = ({ t }) => {
  const f = t[0];
  const label = "@!#".includes(f) ? t.slice(1) : t;
  return (
    <CtxRow $mt={f === "!" ? 1 : 0}>
      {(f === "@" || f === "!") && <CtxBoxSlot><OptBox $ml={0} $mr={0} /></CtxBoxSlot>}
      <CtxLabelR $hi={f === "!"}>{label}</CtxLabelR>
      {f === "#" && <CtxCheck>✓</CtxCheck>}
    </CtxRow>
  );
};
const RR = ({ children, off, tri, box }) => (
  <CtxRow>
    <CtxLabelL $off={off}>{children}</CtxLabelL>
    {tri && <CtxTri />}
    {box && <OptBox $ml={0} $mr={1} />}
  </CtxRow>
);

const Spinner = ({ w, v, off, h, c }) => (<Spin $w={w} $off={off} $h={h}>{v}<SpinArrows $c={off ? "#777" : c} /></Spin>);
const frames = Array.from({ length: 101 }, (_, i) => i);

export default function App() {
  return (
    <Frame>
      <Global />
      <TitleBar>
        <AppMark>3</AppMark>
        PRIMA FASE 7 PRIMA DEL BUCO.max - Autodesk 3ds Max 2018 - Student Version
        <WinButtons>
          <WinBtn><Minus size={15} strokeWidth={1.2} /></WinBtn>
          <WinBtn><Copy size={12} strokeWidth={1.2} /></WinBtn>
          <WinBtn><XIcon size={17} strokeWidth={1.1} /></WinBtn>
        </WinButtons>
      </TitleBar>
      <MenuBar>
        {["File", "Edit", "Tools", "Group", "Views", "Create", "Modifiers"].map(m => <MenuItem key={m}>{m}</MenuItem>)}
        <MenuItem $mr={178}>Animati</MenuItem>
        <MenuItem $mr={26}>ing</MenuItem><MenuItem>Civil View</MenuItem><MenuItem>Customize</MenuItem><MenuItem>Scripting</MenuItem><MenuItem>Content</MenuItem><MenuItem>Arnold</MenuItem><MenuItem $mr={0}>Help</MenuItem>
        <UserBox>
          <svg width="16" height="16" viewBox="0 0 16 16"><circle cx="8" cy="5" r="3.6" fill="#7ea6e0" stroke="#24518f" /><path d="M1 15c1-5 4-5 7-5s6 0 7 5z" fill="#7ea6e0" stroke="#24518f" /></svg>
          Emanuel Ca...<Caret $s={5} $c="#111" />
        </UserBox>
        <WsLabel>Workspaces:</WsLabel>
        <WsDrop>Default<Caret /></WsDrop>
      </MenuBar>
      <Toolbar>
        <Tool><Undo2 size={24} strokeWidth={3} color="#d8d8d8" /></Tool>
        <Tool><Redo2 size={24} strokeWidth={3} color="#d8d8d8" /></Tool>
        <TSep />
        <Tool><Link size={21} strokeWidth={2} color="#cfcfcf" /></Tool>
        <Tool><Unlink size={21} strokeWidth={2} color="#9fd0d0" /></Tool>
        <Tool><BindIc /></Tool>
        <TSep />
        <Gap $w={1} />
        <Drop $w={68}>All<Caret /></Drop>
        <Tool $w={31}><SelObj /></Tool>
        <Tool $w={33}><SelName /></Tool>
        <Tool><RectR /></Tool>
        <Tool><Cross /></Tool>
        <TSep />
        <Tool $on><MoveIc /></Tool>
        <Tool><RotateCw size={24} strokeWidth={3} color="#d8d8d8" /></Tool>
        <Gap $w={205} />
        <Tool $on $w={30} />
        <Gap $w={14} />
        <Tool $w={30}><Snap /></Tool>
        <Tool $w={30}><Snap /></Tool>
        <Gap $w={4} />
        <Tool $w={30}><Snap /></Tool>
        <Tool $w={30}><Question /></Tool>
        <Gap $w={9} />
        <Braces />
        <Gap $w={5} />
        <Drop $w={116}>Create Selection Se<Caret /></Drop>
        <TSep $m={4} />
        <Tool $w={33}><Mirror /></Tool>
        <Tool $w={29}><Align /></Tool>
        <TSep $m={3} />
        <Tool><ListIc /></Tool>
        <Tool><Layers /></Tool>
        <TSep $m={3} />
        <Tool $w={31} $outline><RibbonIc /></Tool>
        <Gap $w={1} />
        <Tool><Curve /></Tool>
        <Tool><Dope /></Tool>
        <TSep $m={3} />
        <Tool><Schem /></Tool>
        <TSep $m={2} />
        <Tool><Teapot1 /></Tool>
        <Tool><Teapot2 /></Tool>
        <Tool><Teapot3 /></Tool>
        <Tool><Teapot4 /></Tool>
        <Tool><Views /></Tool>
      </Toolbar>
      <RibbonTabs>
        <RibbonTab $w={79} $on>Modeling</RibbonTab>
        <RibbonTab $w={94}>Freeform</RibbonTab>
        <RibbonTab $w={90}>Selection</RibbonTab>
        <RibbonTab $w={112}>Object Paint</RibbonTab>
        <RibbonTab $w={82}>Populat</RibbonTab>
      </RibbonTabs>
      <RibbonPanels>
        <RibbonPanel>Polygon Modeling</RibbonPanel>
        <RibbonPanel>Modify Selection</RibbonPanel>
        <RibbonPanel>Edit</RibbonPanel>
        <RibbonPanel>Geometry (All)</RibbonPanel>
        <RibbonPanel>Borders</RibbonPanel>
        <RibbonPanel>Tris</RibbonPanel>
        <RibbonPanel $nb>Subd</RibbonPanel>
      </RibbonPanels>
      <Grip>
        <Dots $w={60} /><Dots $w={154} $ml={8} /><Dots $w={380} $ml={838} />
      </Grip>
      <Main>
        <SideDark>
          <SideBtn><svg width="7" height="10"><path d="M0 0l7 5-7 5z" fill="#ddd" /></svg></SideBtn>
          <Layout $mt={10}><Pane /><Pane /></Layout>
          <Layout $mt={2} $on><Pane $on /></Layout>
        </SideDark>
        <Explorer>
          <ExTabs><span>Select</span><span>Display</span><span>Edit</span></ExTabs>
          <More>»</More>
          <ExBody>
            <Strip>
              <StripBtn><Sphere /></StripBtn><StripBtn><ShapeIc /></StripBtn><StripBtn><Bulb /></StripBtn><StripBtn><Cam /></StripBtn>
              <StripBtn><Ruler /></StripBtn><StripBtn><Waves /></StripBtn><StripBtn><Frame3 /></StripBtn><StripBtn><Imp /></StripBtn>
              <StripBtn><Mic /></StripBtn><StripBtn><Drawer /></StripBtn><StripBtn><Flake /></StripBtn><StripBtn><EyeIc /></StripBtn>
              <StripSep />
              <StripBtn $plain><Doc1 /></StripBtn><StripBtn $plain><Doc2 /></StripBtn><StripBtn $plain><Doc3 /></StripBtn>
              <StripSep />
              <StripBtn $plain><Fun1 /></StripBtn><StripBtn $plain><Fun2 /></StripBtn><StripBtn $plain><Brick /></StripBtn>
            </Strip>
            <Tree>
              <TreeHead>Name (Sorted Ascending)</TreeHead>
              <TreeBody>
                {[
                  ["Bottiglia", 1, 0, 0, 0, 0], ["Line001", 0, 1, 0, 1, 1], ["Line002", 0, 1, 0, 0, 0], ["Plane001", 0, 0, 1, 1, 1], ["Plane002", 0, 0, 1, 0, 0],
                  ["Plane002", 0, 0, 1, 1, 1], ["Spruzzino", 1, 0, 0, 0, 2], ["Tappo1", 0, 0, 0, 0, 0], ["Tappo2", 0, 0, 0, 1, 1], ["Tappo3", 0, 0, 0, 0, 0],
                ].map(([n, on, shp, it, alt, k], i) => (
                  <TreeRow key={i}>
                    <Guide />
                    <Slot $w={12}>{on ? <EyeIc s={13} /> : <Blob />}</Slot>
                    <Slot $w={17}>{shp ? <ShapeIc s={15} /> : <Dot />}</Slot>
                    <RowName $on={on} $it={it} $alt={alt} $sel={k === 2}>{n}</RowName>
                  </TreeRow>
                ))}
              </TreeBody>
              <HScroll><svg width="7" height="10"><path d="M6 1L2 5l4 4" stroke="#444" strokeWidth="2" fill="none" /></svg><Thumb /><svg width="7" height="10"><path d="M1 1l4 4-4 4" stroke="#444" strokeWidth="2" fill="none" /></svg></HScroll>
              <MoreBottom>»</MoreBottom>
            </Tree>
          </ExBody>
        </Explorer>
        <Viewport>
          <Scene />
          <VLabel>[+ ] [Orthographic ] [User Defined ] [Edged F</VLabel>
        </Viewport>
        <Right>
          <CmdTabs>
            <CmdTab><PlusIc /></CmdTab><CmdTab $on><ModIc /></CmdTab><CmdTab><Hier /></CmdTab><CmdTab><Motion /></CmdTab><CmdTab><Mon /></CmdTab><CmdTab><Wrench /></CmdTab>
          </CmdTabs>
          <Cols>
            <ColA>
              <NameRow><NameInput>Spruzzino</NameInput><Swatch $c="#c3ae4c" /></NameRow>
              <ModDrop $w={184}>Modifier List<Caret /></ModDrop>
              <Stack>
                <StackList>
                  <StackRow><Tri /><StackLabel>Editable Poly<Ear /></StackLabel></StackRow>
                  <StackRow><Branch /><StackLabel>Vertex</StackLabel></StackRow>
                  <StackRow><Branch /><StackLabel>Edge</StackLabel></StackRow>
                  <StackRow><Branch /><StackLabel $sel>Border<Ear /></StackLabel></StackRow>
                  <StackRow><Branch /><StackLabel>Polygon</StackLabel></StackRow>
                  <StackRow><Branch $last /><StackLabel>Element</StackLabel></StackRow>
                </StackList>
              </Stack>
              <StackTools>
                <Tool $w={20}><Pin /></Tool><TSep $m={8} />
                <Tool $w={18}><Tube /></Tool><TSep $m={9.5} />
                <Tool $w={14}><Rings /></Tool><Tool $w={34}><Trash2 size={15} color="#cfcfcf" /></Tool><TSep $m={2} />
                <Tool $w={28}><Config /></Tool>
              </StackTools>
              <Divider />
              <Rollout $h={238} $mt={8}>
                <RollHead><Arrow $open />Selection<Handle /></RollHead>
                <RowY $h={21} $mt={5} $pl={25}>
                  <Tool $w={23} $h={21}><VDots /></Tool><Tool $w={25} $h={21}><VEdge /></Tool><Tool $w={23} $h={21} $on><Ear s={18} c="#1b3c66" /></Tool><Tool $w={25} $h={21}><VPoly /></Tool><Tool $w={24} $h={21}><VCube /></Tool>
                </RowY>
                <RowY $mt={6} $pl={16}><CheckBox />By Vertex</RowY>
                <RowY $mt={1} $pl={16}><CheckBox />Ignore Backfacing</RowY>
                <RowY $mt={1} $pl={16}><CheckBox $mr={2} /><RLabel>By Angle:</RLabel><Spin $w={79} $off $ml={7}>45,0<SpinArrows $c="#777" /></Spin></RowY>
                <RowY $h={17} $mt={3} $pl={16}><Btn $w={70}>Shrink</Btn><Btn $w={70} $ml={8}>Grow</Btn></RowY>
                <RowY $h={17} $mt={5} $pl={16}><Btn $w={55}>Ring</Btn><SpinArrows $ml={8} /><Btn $w={57} $ml={8}>Loop</Btn><SpinArrows $ml={4} /></RowY>
                <Field $w={159} $ml={7} $mt={4} $pb={6}>
                  <Legend>Preview Selection</Legend>
                  <RowY $h={14} $mt={4} $pl={2}><Radio $on /><RLabel $ml={7} $w={17}>Off</RLabel><Radio $ml={15} /><RLabel $ml={7} $w={36}>SubObj</RLabel><Radio $ml={9} /><RLabel $ml={7}>Multi</RLabel></RowY>
                </Field>
                <StatusNote>8 Edges Selected</StatusNote>
              </Rollout>
              <Rollout $mt={2}><RollHead $h={20}><Arrow />Soft Selection<Handle /></RollHead></Rollout>
              <Rollout $mt={2}><RollHead $h={20}><Arrow />Paint Deformation<Handle /></RollHead></Rollout>
            </ColA>
            <ColB>
              <Rollout $w={176} $h={202}>
                <RollHead $h={19}><Arrow $open />Edit Borders<Handle /></RollHead>
                <RowY $h={17} $mt={8} $pl={14}><Btn $w={55}>Extrude</Btn><OptBox $s={11} $ml={3} $mr={3} /><Btn $w={70} $ml={5}>Insert Vertex</Btn></RowY>
                <RowY $h={17} $mt={5} $pl={14}><Btn $w={55}>Chamfer</Btn><OptBox $s={11} $ml={3} $mr={3} /><Btn $w={70} $ml={5}>Cap</Btn></RowY>
                <RowY $h={17} $mt={6} $pl={14}><Btn $w={55}>Bridge</Btn><OptBox $s={11} $ml={3} $mr={3} /><Btn $w={55} $ml={5}>Connect</Btn><OptBox $s={11} $ml={3} $mr={0} /></RowY>
                <RowY $h={17} $mt={6} $pl={14}><Btn $w={147}>Create Shape From Selection</Btn></RowY>
                <Box>
                  <RowY $h={16} $pl={14}><RightLabel $w={38}>Weight:</RightLabel><Spin $w={70} $ml={6}>1,0<SpinArrows /></Spin></RowY>
                  <RowY $h={16} $mt={3} $pl={14}><RightLabel $w={38}>Crease:</RightLabel><Spin $w={70} $ml={6}>0,0<SpinArrows /></Spin></RowY>
                </Box>
                <RowY $h={17} $mt={7} $pl={14}><Btn $w={70}>Edit Tri.</Btn><Btn $w={70} $ml={7}>Turn</Btn></RowY>
              </Rollout>
              <Rollout $w={176} $mt={2}><RollHead $h={20}><Arrow />Subdivision Displacemen<Handle /></RollHead></Rollout>
              <Rollout $w={176} $mt={2} $h={367}>
                <RollHead $h={19}><Arrow $open />Subdivision Surface<Handle /></RollHead>
                <RowY $mt={7} $pl={19}><CheckBox>✓</CheckBox>Smooth Result</RowY>
                <RowY $mt={3} $pl={19}><CheckBox />Use NURMS Subdivision</RowY>
                <RowY $mt={1} $pl={19}><CheckBox>✓</CheckBox>Isoline Display</RowY>
                <RowY $mt={2} $pl={19}><CheckBox /><RLabel $w={80}>Show Cage......</RLabel><Swatch $c="#f5b800" $w={15} $h={15} $ml={8} /><Swatch $c="#e6e49a" $w={15} $h={15} $ml={7} /></RowY>
                <Field $w={151} $ml={13} $pb={5}>
                  <Legend>Display</Legend>
                  <RowY $h={16} $mt={-2}><RightLabel $w={83}>Iterations:</RightLabel><Spin $w={57} $ml={5}>3<SpinArrows /></Spin></RowY>
                  <RowY $h={16} $mt={5}><RightLabel $w={83}>Smoothness:</RightLabel><Spin $w={57} $ml={5}>1,0<SpinArrows /></Spin></RowY>
                </Field>
                <Field $w={151} $ml={13} $pb={6}>
                  <Legend>Render</Legend>
                  <RowY $h={16} $mt={-1} $pl={6}><CheckBox $mr={0} /><RightLabel $w={67}>Iterations:</RightLabel><Spin $w={57} $ml={5} $off>0<SpinArrows $c="#777" /></Spin></RowY>
                  <RowY $h={16} $mt={4} $pl={6}><CheckBox $mr={0} /><RightLabel $w={67}>Smoothness:</RightLabel><Spin $w={57} $ml={5} $off>1,0<SpinArrows $c="#777" /></Spin></RowY>
                </Field>
                <Field $w={151} $ml={13} $pb={3}>
                  <Legend>Separate By</Legend>
                  <RowY $mt={2} $pl={5}><CheckBox />Smoothing Groups</RowY>
                  <RowY $pl={5}><CheckBox />Materials</RowY>
                </Field>
                <Field $w={151} $ml={13} $pb={8}>
                  <Legend>Update Options</Legend>
                  <RowY $h={16} $pl={6}><Radio $on /><RLabel $ml={6}>Always</RLabel></RowY>
                  <RowY $h={16} $pl={6}><Radio /><RLabel $ml={6}>When Rendering</RLabel></RowY>
                  <RowY $h={16} $pl={6}><Radio /><RLabel $ml={6}>Manually</RLabel></RowY>
                  <RowY $h={19} $mt={6}><Btn $w={94} $h={19} $ml={26}>Update</Btn></RowY>
                </Field>
              </Rollout>
            </ColB>
            <Scroll />
          </Cols>
        </Right>
      </Main>
      <SliderRow>
        <SliderBtn $w={14}>&lt;</SliderBtn><SliderBtn $w={123}>0 / 100</SliderBtn><SliderBtn $w={14}>&gt;</SliderBtn>
      </SliderRow>
      <TrackRow>
        <Track>
          <TrackSvg width="1380" height="26" viewBox="10 788 1380 26">
            <path d="M24 798v7M27 799h-3M27 803h-3" stroke="#999" />
            <path d="M29 804l3-9 3 7 3-4" stroke={TEAL} fill="none" />
            {frames.map(f => {
              const x = 65 + f * 13.18;
              return <path key={f} d={`M${x} 789v${f % 5 === 0 ? 12 : 7}`} stroke={f % 5 === 0 ? "#888" : "#5f5f5f"} />;
            })}
            <rect x="62" y="790" width="6" height="23" fill="#8a8030" />
            {frames.filter(f => f % 5 === 0).map(f => (
              <text key={f} x={65 + f * 13.18} y="811" fill={f === 0 ? "#c9bd5a" : "#9a9a9a"} fontSize="10.5" letterSpacing="-0.4" textAnchor="middle" fontFamily="Noto Sans">{f}</text>
            ))}
          </TrackSvg>
        </Track>
      </TrackRow>
      <Status>
        <Mini>
          <MiniPink />
          <MiniWhite>MAXScript Mi</MiniWhite>
        </Mini>
        <StSep />
        <Info>
          <InfoLine $mb={11}>1 Object Selected</InfoLine>
          <InfoLine>Click or click-and-drag to select objects</InfoLine>
        </Info>
        <Coords>
          <CoordRow>
            <CIcon><Isolate /></CIcon><CIcon><Lock size={15} color="#ddd" fill="#ddd" /></CIcon><CIcon><Absolute /></CIcon>
            <CLabel $w={17} $pl={2}>X:</CLabel><Spinner w={66} v="38,583" h={19} />
            <CLabel $w={17} $pl={3}>Y:</CLabel><Spinner w={66} v="-140,018" h={19} />
            <CLabel $w={17} $pl={4}>Z:</CLabel><Spinner w={66} v="632,866" h={19} />
            <CLabel $w={60} $pl={7}>Grid = 0,0</CLabel>
          </CoordRow>
          <CoordRow $mt={6} $pl={311}><TagBtn><TagCube /></TagBtn><CLabel $w={80}>Add Time Tag</CLabel></CoordRow>
        </Coords>
        <Play>
          <PlayRow>
            <PSlot $w={13}><PlayGlyph d="M2 3h2v10H2zM10 3v10L5 8zM15 3v10l-5-5z" /></PSlot>
            <TSep $m={3} />
            <PSlot $w={24}><PlayGlyph d="M6 3v10L1 8zM8 3h2v10H8zM12 3h2v10h-2z" /></PSlot>
            <PSlot $w={22}><PlayGlyph s={20} d="M3 1l12 7-12 7z" /></PSlot>
            <PSlot $w={22}><PlayGlyph d="M2 3h2v10H2zM6 3h2v10H6zM10 3v10l5-5z" /></PSlot>
            <TSep $m={3} />
            <PSlot $w={18}><PlayGlyph d="M1 3v10l5-5zM6 3v10l5-5zM12 3h2v10h-2z" /></PSlot>
          </PlayRow>
          <PlayRow $mt={3}>
            <PSlot $w={13}><PlayGlyph d="M7 3v10L1 8zM9 3v10l6-5z" /></PSlot>
            <TSep $m={3} />
            <Gap $w={2} />
            <Spinner w={68} v="0" h={19} />
            <PSlot $w={30}><Clock /></PSlot>
          </PlayRow>
        </Play>
        <BigKey><BigPlus /></BigKey>
        <Keys>
          <KeyBtn $narrow>Auto Key</KeyBtn><KeyDrop>Selected<Caret /></KeyDrop>
          <KeyBtn $narrow>Set Key</KeyBtn><KeyIco><Tang /></KeyIco><KeyBtn>Key Filters...</KeyBtn>
        </Keys>
        <Nav>
          <NavI><Nav1 /></NavI><NavI><Nav2 /></NavI><NavI><Nav3 /></NavI><NavI><Nav4 /></NavI>
          <NavI><Nav5 /></NavI><NavI><Hand size={18} color="#ddd" fill="#ddd" /></NavI><NavI><Nav7 /></NavI><NavI><Nav8 /></NavI>
        </Nav>
      </Status>
      <Taskbar>
        <TSlot $first><FaWindows size={17} /></TSlot>
        <TSlot><Flip><Search size={19} strokeWidth={1.4} /></Flip></TSlot>
        <TSlot $run><FaFolder size={18} color="#f2c650" /></TSlot>
        <TSlot><FaFirefox size={18} color="#e66a2b" /></TSlot>
        <TSlot><svg width="20" height="20" viewBox="0 0 20 20"><circle cx="9" cy="9" r="7" fill="#b88" /><path d="M9 4v5h4" stroke="#fff" fill="none" /><path d="M13 13l3 5" stroke="#46c" strokeWidth="2" /></svg></TSlot>
        <TSlot><FaChrome size={18} color="#e0c040" /></TSlot>
        <TSlot><FaCalculator size={18} color="#eee" /></TSlot>
        <TSlot><FaSpotify size={18} color="#1ed760" /></TSlot>
        <TSlot><FaWhatsapp size={19} color="#3fd063" /></TSlot>
        <TSlot $run><FaSkype size={19} color="#1aa3e8" /></TSlot>
        <TSlot $run><FaFirefox size={18} color="#e66a2b" /></TSlot>
        <TSlot $run $active $w={37}><AppMark>3</AppMark></TSlot>
        <TraySpacer />
        <TSlot $w={24}><ChevronUp size={16} strokeWidth={1.4} /></TSlot>
        <TSlot $w={25}><Wifi size={15} strokeWidth={1.4} /></TSlot>
        <TSlot $w={21}><Volume2 size={16} strokeWidth={1.4} /></TSlot>
        <TSlot $w={26}><FileText size={16} strokeWidth={1.4} fill="#fff" color="#000" /></TSlot>
        <TSlot $w={30}><Keyboard size={20} strokeWidth={1.2} /></TSlot>
        <TSlot $w={38} $text>ITA</TSlot>
        <TSlot $w={80} $text>17:02</TSlot>
        <TSlot $w={4} />
      </Taskbar>

      <Ctx $x={450} $y={4} $pt={4} $pb={2}>
        {leftMenu.map((g, i) => <CtxGroup key={i}>{g.map(t => <LeftRow key={t} t={t} />)}</CtxGroup>)}
        <CtxGroup><CtxBar><CtxBarText>tools 1</CtxBarText><Blue /></CtxBar></CtxGroup>
        <CtxGroup><CtxBar><CtxBarText>tools 2</CtxBarText><Blue /></CtxBar></CtxGroup>
        {leftMenu2.map((g, i) => <CtxGroup key={i} $nb={i === 2}>{g.map(t => <LeftRow key={t} t={t} />)}</CtxGroup>)}
      </Ctx>
      <Ctx $x={628} $y={53}>
        <CtxGroup><RR tri>Viewport Lighting and Shadows</RR></CtxGroup>
        <CtxGroup><RR>Isolate Selection</RR><RR off>End Isolate</RR></CtxGroup>
        <CtxGroup><RR>Unfreeze All</RR><RR>Freeze Selection</RR></CtxGroup>
        <CtxGroup><RR>Unhide by Name</RR><RR>Unhide All</RR><RR>Hide Unselected</RR><RR>Hide Selection</RR></CtxGroup>
        <CtxGroup><RR tri>State Sets</RR><RR>Manage State Sets...</RR></CtxGroup>
        <CtxGroup><RR>Show Motion Paths</RR></CtxGroup>
        <CtxGroup><CtxBar><Blue /><CtxBarText>display</CtxBarText></CtxBar></CtxGroup>
        <CtxGroup><CtxBar><Blue /><CtxBarText>transform</CtxBarText></CtxBar></CtxGroup>
        <CtxGroup><RR box>Move</RR><RR box>Rotate</RR><RR box>Scale</RR><RR>Placement</RR><RR>Select</RR><RR off><u>S</u>elect Similar</RR></CtxGroup>
        <CtxGroup><RR>Place Pivot Surface</RR></CtxGroup>
        <CtxGroup><RR><u>C</u>lone</RR></CtxGroup>
        <CtxGroup><RR>Object <u>P</u>roperties...</RR></CtxGroup>
        <CtxGroup><RR>Curve Editor...</RR><RR>Dope Sheet...</RR><RR>Wire Parameters...</RR></CtxGroup>
        <CtxGroup $nb><RR tri>Convert To:</RR></CtxGroup>
      </Ctx>
    </Frame>
  );
}
